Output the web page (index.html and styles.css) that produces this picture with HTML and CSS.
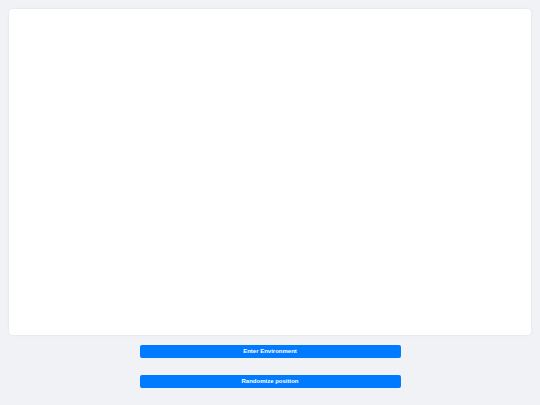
FILE: index.html
```html
<!DOCTYPE html>
<html>
<head>
<meta charset="utf-8">
<link rel="stylesheet" href="styles.css">
</head>
<body>
<div class="page">
  <div class="canvas-card"></div>
  <div class="controls">
    <button class="btn">Enter Environment</button>
    <button class="btn">Randomize position</button>
  </div>
</div>
</body>
</html>
```
FILE: styles.css
```css
html, body {
  margin: 0;
  padding: 0;
  background: #f0f2f5;
  font-family: "Liberation Sans", Arial, Helvetica, sans-serif;
}
.page {
  padding: 9px;
  display: flex;
  flex-direction: column;
  align-items: center;
}
.canvas-card {
  width: 100%;
  height: 326px;
  background: #ffffff;
  border-radius: 4px;
  box-shadow: 0 0 3px rgba(0, 0, 0, 0.08);
}
.controls {
  width: 50%;
  margin-top: 9.5px;
  display: flex;
  flex-direction: column;
  gap: 17px;
}
.btn {
  display: block;
  width: 100%;
  height: 13px;
  padding: 0;
  margin: 0;
  border: none;
  border-radius: 2px;
  background: #007bff;
  color: #ffffff;
  font-family: "Liberation Sans", Arial, Helvetica, sans-serif;
  font-weight: bold;
  font-size: 6px;
  line-height: 13px;
  text-align: center;
}
```
